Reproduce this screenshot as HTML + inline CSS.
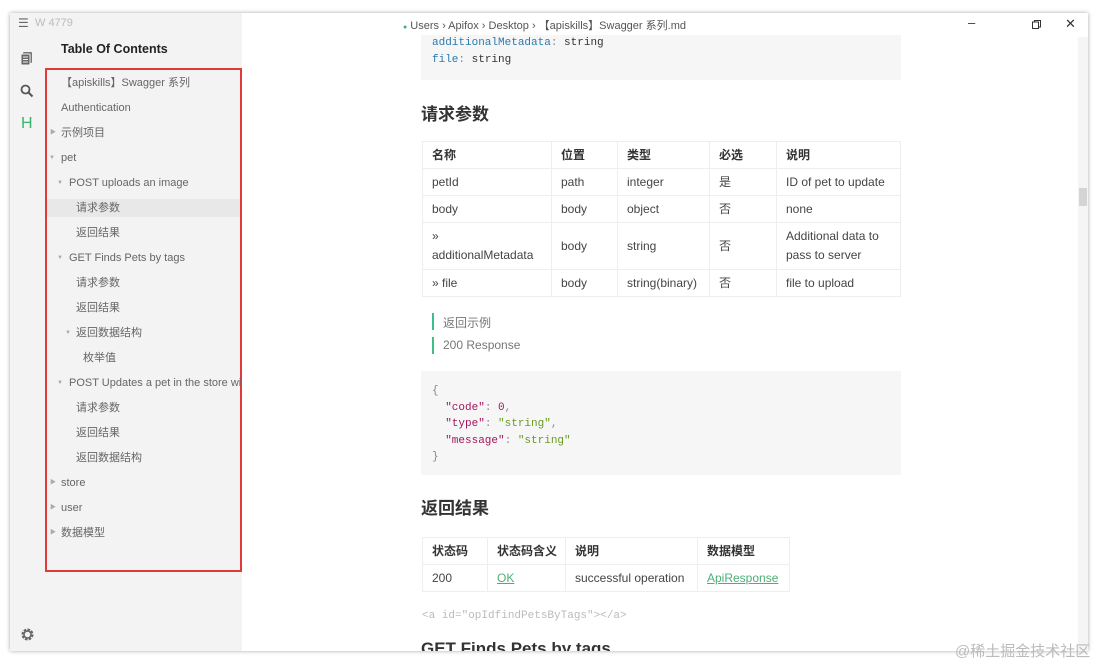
<!DOCTYPE html>
<html><head><meta charset="utf-8"><style>
*{margin:0;padding:0;box-sizing:border-box}
body{width:1098px;height:664px;background:#fff;position:relative;overflow:hidden;font-family:"Liberation Sans","Noto Sans CJK SC",sans-serif;}
.win{position:absolute;left:10px;top:13px;width:1078px;height:638px;background:#fff;box-shadow:0 0 4px rgba(0,0,0,.35);overflow:hidden}
.side{position:absolute;left:0;top:0;width:232px;height:638px;background:#f3f3f3}
.a{position:absolute;white-space:nowrap}
.toc{font-size:11px;color:#666;line-height:14px;height:14px;margin-top:1px}
.tri{position:absolute;font-size:6px;color:#aaa;line-height:14px;margin-top:1px}
.mono{font-family:"Liberation Mono","Noto Sans CJK SC",monospace;font-size:11px}
table{position:absolute;border-collapse:collapse;font-size:12px;color:#444}
td,th{border:1px solid #eee;padding:0 9px;text-align:left;vertical-align:middle;white-space:nowrap;line-height:16px}
th{font-weight:bold;color:#333;height:27px}
td{height:27px}
h2{position:absolute;font-size:17px;font-weight:bold;color:#333;line-height:22px;font-family:"Liberation Sans","Noto Sans CJK SC",sans-serif}
.g{color:#4caf77;text-decoration:underline}
</style></head><body>
<div class="win">
<div class="side">
  <div class="a" style="left:8px;top:3px;font-size:12px;color:#666">☰</div>
  <div class="a" style="left:25px;top:4px;font-size:11px;color:#bbb">W 4779</div>
  <svg class="a" style="left:10px;top:38px" width="14" height="16" viewBox="0 0 14 16"><rect x="3" y="1" width="9" height="11" rx="1" fill="#777"/><rect x="1" y="3" width="9" height="11" rx="1" fill="#666" stroke="#f3f3f3"/><path d="M3 6h5M3 8.5h5M3 11h5" stroke="#f3f3f3"/></svg>
  <svg class="a" style="left:10px;top:71px" width="14" height="14" viewBox="0 0 14 14"><circle cx="5.5" cy="5.5" r="4" stroke="#555" stroke-width="1.8" fill="none"/><path d="M8.5 8.5l4 4" stroke="#555" stroke-width="2"/></svg>
  <div class="a" style="left:11px;top:102px;font-size:16px;color:#3cb371">H</div>
  <svg class="a" style="left:11px;top:615px" width="13" height="13" viewBox="0 0 13 13"><circle cx="6.5" cy="6.5" r="4.5" fill="none" stroke="#666" stroke-width="3" stroke-dasharray="2.4 1.1"/><circle cx="6.5" cy="6.5" r="3.5" fill="none" stroke="#666" stroke-width="1.5"/></svg>
  <div class="a" style="left:51px;top:29px;font-size:12.5px;font-weight:bold;color:#222">Table Of Contents</div>
  <div class="a" style="left:35px;top:186px;width:195px;height:18px;background:#e8e8e8"></div>
  <div class="a" style="left:35px;top:55px;width:197px;height:504px;border:2px solid #e03a3a"></div>
  <div class="a toc" style="left:51px;top:62px">【apiskills】Swagger 系列</div>
  <div class="a toc" style="left:51px;top:87px">Authentication</div>
  <div class="tri" style="left:40px;top:112px">▶</div><div class="a toc" style="left:51px;top:112px">示例项目</div>
  <div class="tri" style="left:39px;top:137px">▼</div><div class="a toc" style="left:51px;top:137px">pet</div>
  <div class="tri" style="left:47px;top:162px">▼</div><div class="a toc" style="left:59px;top:162px">POST uploads an image</div>
  <div class="a toc" style="left:66px;top:187px">请求参数</div>
  <div class="a toc" style="left:66px;top:212px">返回结果</div>
  <div class="tri" style="left:47px;top:237px">▼</div><div class="a toc" style="left:59px;top:237px">GET Finds Pets by tags</div>
  <div class="a toc" style="left:66px;top:262px">请求参数</div>
  <div class="a toc" style="left:66px;top:287px">返回结果</div>
  <div class="tri" style="left:55px;top:312px">▼</div><div class="a toc" style="left:66px;top:312px">返回数据结构</div>
  <div class="a toc" style="left:73px;top:337px">枚举值</div>
  <div class="tri" style="left:47px;top:362px">▼</div><div class="a toc" style="left:59px;top:362px;width:172px;overflow:hidden">POST Updates a pet in the store with</div>
  <div class="a toc" style="left:66px;top:387px">请求参数</div>
  <div class="a toc" style="left:66px;top:412px">返回结果</div>
  <div class="a toc" style="left:66px;top:437px">返回数据结构</div>
  <div class="tri" style="left:40px;top:462px">▶</div><div class="a toc" style="left:51px;top:462px">store</div>
  <div class="tri" style="left:40px;top:487px">▶</div><div class="a toc" style="left:51px;top:487px">user</div>
  <div class="tri" style="left:40px;top:512px">▶</div><div class="a toc" style="left:51px;top:512px">数据模型</div>
</div>
<div class="a" style="left:393px;top:4px;font-size:11px;color:#555"><span style="color:#3cb371;font-size:7px">●</span> Users › Apifox › Desktop › 【apiskills】Swagger 系列.md</div>
<div class="a" style="left:958px;top:2px;font-size:13px;color:#333">–</div>
<svg class="a" style="left:1022px;top:7px" width="9" height="9" viewBox="0 0 9 9"><rect x="0.5" y="2" width="6" height="6.5" fill="none" stroke="#333"/><path d="M2.5 2V.5h6v6.5H6.5" fill="none" stroke="#333"/></svg>
<div class="a" style="left:1055px;top:3px;font-size:13px;color:#333">✕</div>
<div class="a" style="left:1068px;top:24px;width:10px;height:614px;background:#f5f5f5"></div>
<div class="a" style="left:1069px;top:175px;width:8px;height:18px;background:#d4d4d4"></div>
<div class="a" style="left:411px;top:22px;width:480px;height:45px;background:#f6f6f6"></div>
<div class="a mono" style="left:422px;top:24px;color:#2a7ab0">additionalMetadata<span style="color:#888">:</span> <span style="color:#333">string</span></div>
<div class="a mono" style="left:422px;top:41px;color:#2a7ab0">file<span style="color:#888">:</span> <span style="color:#333">string</span></div>
<h2 style="left:411px;top:91px">请求参数</h2>
<table style="left:412px;top:128px;width:479px">
<tr><th style="width:129px">名称</th><th style="width:66px">位置</th><th style="width:92px">类型</th><th style="width:67px">必选</th><th>说明</th></tr>
<tr><td>petId</td><td>path</td><td>integer</td><td>是</td><td>ID of pet to update</td></tr>
<tr><td>body</td><td>body</td><td>object</td><td>否</td><td>none</td></tr>
<tr><td style="height:47px;line-height:19px">»<br>additionalMetadata</td><td>body</td><td>string</td><td>否</td><td style="line-height:19px">Additional data to<br>pass to server</td></tr>
<tr><td>» file</td><td>body</td><td>string(binary)</td><td>否</td><td>file to upload</td></tr>
</table>
<div class="a" style="left:422px;top:300px;width:2px;height:17px;background:#3cc08a"></div>
<div class="a" style="left:433px;top:301px;font-size:12px;color:#777">返回示例</div>
<div class="a" style="left:422px;top:324px;width:2px;height:17px;background:#3cc08a"></div>
<div class="a" style="left:433px;top:325px;font-size:12px;color:#777">200 Response</div>
<div class="a" style="left:411px;top:358px;width:480px;height:104px;background:#f6f6f6"></div>
<div class="a mono" style="left:422px;top:370px;color:#888;line-height:16.5px">{<br>&nbsp;&nbsp;<span style="color:#a3165f">"code"</span>: <span style="color:#a3165f">0</span>,<br>&nbsp;&nbsp;<span style="color:#a3165f">"type"</span>: <span style="color:#6a9a1f">"string"</span>,<br>&nbsp;&nbsp;<span style="color:#a3165f">"message"</span>: <span style="color:#6a9a1f">"string"</span><br>}</div>
<h2 style="left:411px;top:485px">返回结果</h2>
<table style="left:412px;top:524px;width:367px;table-layout:fixed">
<tr><th style="width:65px">状态码</th><th style="width:78px">状态码含义</th><th style="width:132px">说明</th><th style="width:92px">数据模型</th></tr>
<tr><td>200</td><td><span class="g">OK</span></td><td>successful operation</td><td><span class="g">ApiResponse</span></td></tr>
</table>
<div class="a mono" style="left:412px;top:597px;color:#bbb">&lt;a id="opIdfindPetsByTags"&gt;&lt;/a&gt;</div>
<h2 style="left:411px;top:625px">GET Finds Pets by tags</h2>
</div>
<div class="a" style="left:955px;top:640px;font-size:15px;color:#bbb">@稀土掘金技术社区</div>
</body></html>
